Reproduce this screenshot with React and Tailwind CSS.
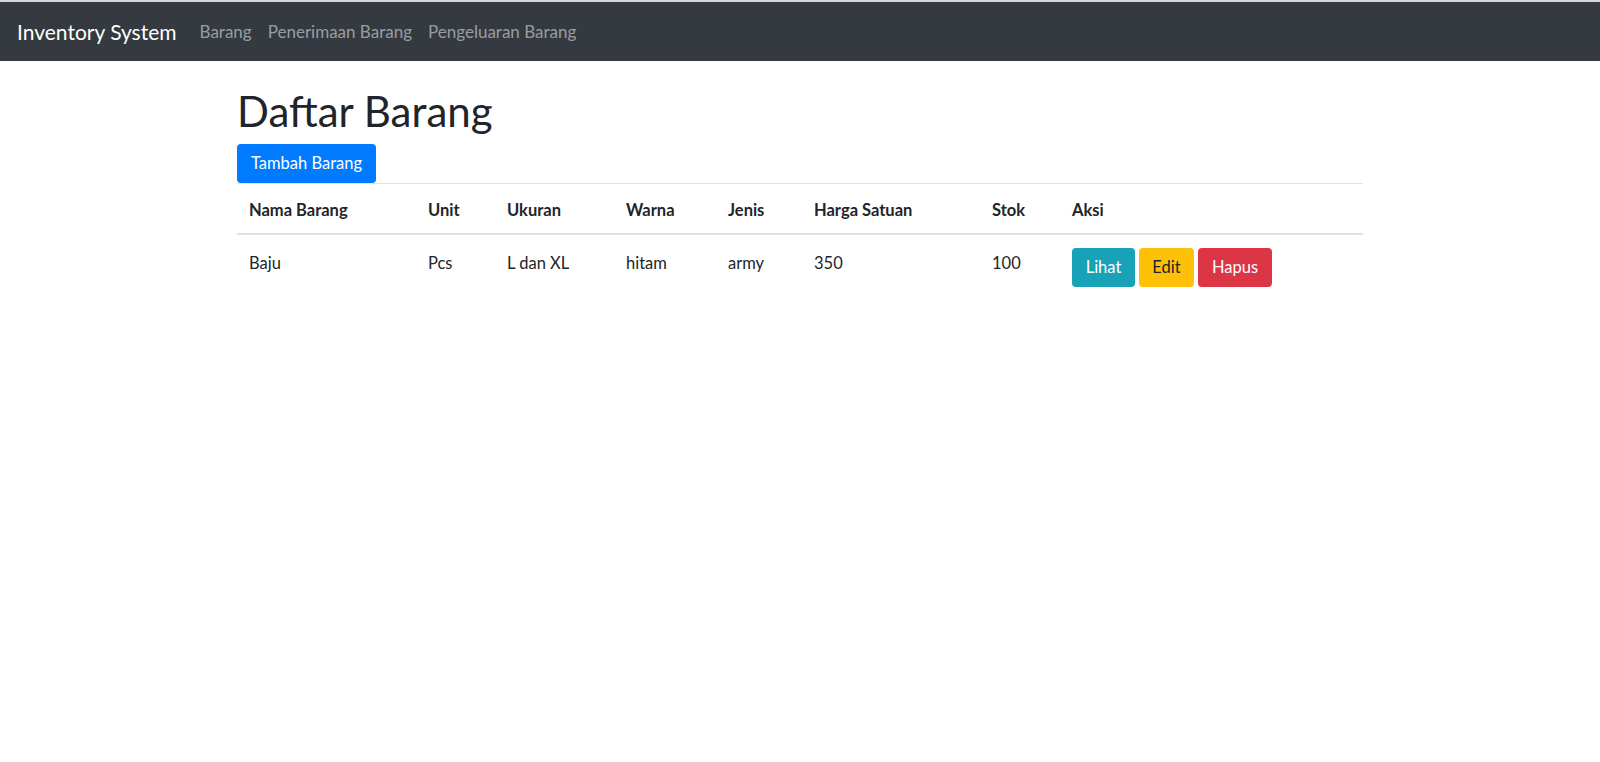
export default function App() {
  const rows = [
    { nama: 'Baju', unit: 'Pcs', ukuran: 'L dan XL', warna: 'hitam', jenis: 'army', harga: '350', stok: '100' },
  ]

  return (
    <div className="min-h-screen bg-white text-[#212529] text-[16px]" style={{ fontFamily: 'Lato, "Noto Sans", sans-serif' }}>
      {/* top strip */}
      <div className="h-[2px] bg-[#d6d6d6]" />

      {/* Navbar */}
      <nav className="h-[59px] bg-[#343a40] flex items-center px-[17px]">
        <span className="text-[21px] text-white mr-[23px]">Inventory System</span>
        <div className="flex items-center gap-[16px] text-[17px] text-[#9a9da0]">
          <span>Barang</span>
          <span>Penerimaan Barang</span>
          <span>Pengeluaran Barang</span>
        </div>
      </nav>

      {/* Content */}
      <div className="w-[1126px] mx-auto mt-[25px]">
        <h1 className="text-[42px] leading-[50px] mb-[8px] font-normal">Daftar Barang</h1>
        <button className="h-[39px] w-[139px] rounded-[4px] bg-[#007bff] text-white text-[16.5px]">Tambah Barang</button>

        <table className="w-full table-fixed border-collapse text-[16.5px]">
          <colgroup>
            <col className="w-[179px]" />
            <col className="w-[79px]" />
            <col className="w-[119px]" />
            <col className="w-[102px]" />
            <col className="w-[86px]" />
            <col className="w-[178px]" />
            <col className="w-[80px]" />
            <col />
          </colgroup>
          <thead>
            <tr className="border-t border-[#dee2e6] border-b-2">
              {['Nama Barang', 'Unit', 'Ukuran', 'Warna', 'Jenis', 'Harga Satuan', 'Stok', 'Aksi'].map((h) => (
                <th key={h} className="px-[12px] pt-[14px] pb-[11px] text-left font-bold leading-[24px]">{h}</th>
              ))}
            </tr>
          </thead>
          <tbody>
            {rows.map((r) => (
              <tr key={r.nama}>
                <td className="px-[12px] pt-[16px] pb-[12px] align-top leading-[25px]">{r.nama}</td>
                <td className="px-[12px] pt-[16px] pb-[12px] align-top leading-[25px]">{r.unit}</td>
                <td className="px-[12px] pt-[16px] pb-[12px] align-top leading-[25px]">{r.ukuran}</td>
                <td className="px-[12px] pt-[16px] pb-[12px] align-top leading-[25px]">{r.warna}</td>
                <td className="px-[12px] pt-[16px] pb-[12px] align-top leading-[25px]">{r.jenis}</td>
                <td className="px-[12px] pt-[16px] pb-[12px] align-top leading-[25px]">{r.harga}</td>
                <td className="px-[12px] pt-[16px] pb-[12px] align-top leading-[25px]">{r.stok}</td>
                <td className="px-[12px] pt-[13px] pb-[12px] align-top">
                  <div className="flex gap-[4px]">
                    <button className="h-[39px] w-[63px] rounded-[4px] bg-[#17a2b8] text-white">Lihat</button>
                    <button className="h-[39px] w-[55px] rounded-[4px] bg-[#ffc107] text-[#212529]">Edit</button>
                    <button className="h-[39px] w-[74px] rounded-[4px] bg-[#dc3545] text-white">Hapus</button>
                  </div>
                </td>
              </tr>
            ))}
          </tbody>
        </table>
      </div>
    </div>
  )
}
